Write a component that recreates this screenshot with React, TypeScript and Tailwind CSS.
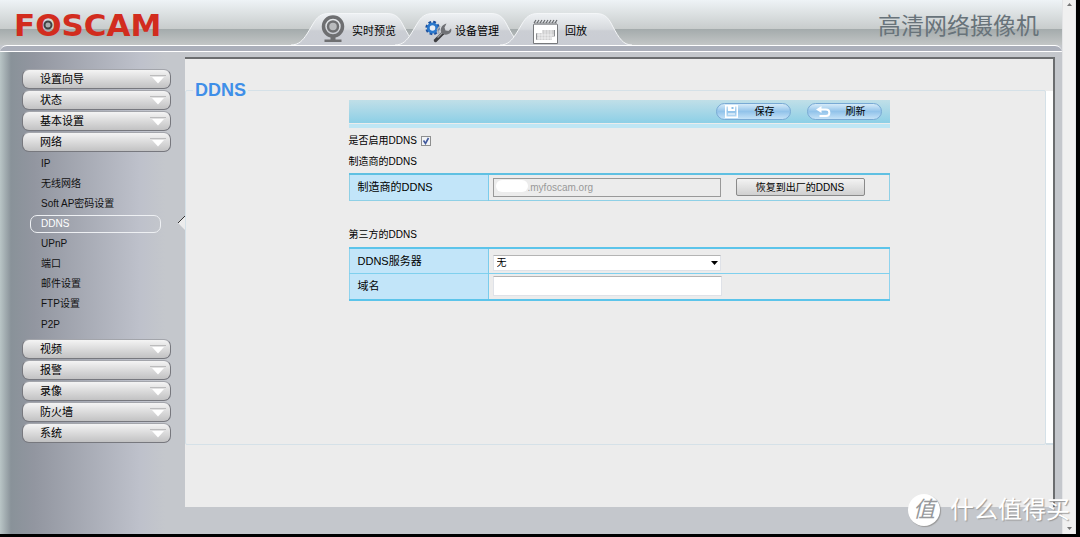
import { useState } from 'react';

interface MenuGroup {
  title: string;
  items?: string[];
}

const MENU: MenuGroup[] = [
  { title: '设置向导' },
  { title: '状态' },
  { title: '基本设置' },
  {
    title: '网络',
    items: ['IP', '无线网络', 'Soft AP密码设置', 'DDNS', 'UPnP', '端口', '邮件设置', 'FTP设置', 'P2P'],
  },
  { title: '视频' },
  { title: '报警' },
  { title: '录像' },
  { title: '防火墙' },
  { title: '系统' },
];

function CameraIcon() {
  return (
    <svg width="24" height="28" viewBox="0 0 24 28" fill="none">
      <circle cx="12" cy="11.5" r="9.5" stroke="#6e6f71" strokeWidth="3.5" />
      <circle cx="12" cy="11.5" r="5" fill="#b9bbbd" stroke="#6e6f71" strokeWidth="2.5" />
      <path d="M9.5 21h5v3.5h6V27h-17v-2.5h6z" fill="#6e6f71" />
    </svg>
  );
}

function GearIcon() {
  return (
    <svg width="27" height="28" viewBox="0 0 27 28" fill="none">
      <circle cx="7.5" cy="13" r="5.8" stroke="#1d4f9c" strokeWidth="2.8" strokeDasharray="2.6 1.95" />
      <circle cx="7.5" cy="13" r="4.2" fill="#e9eef5" stroke="#2a78cc" strokeWidth="2.8" />
      <path d="M10.500 25.500L18 18" stroke="#3c3c3e" strokeWidth="3.4" strokeLinecap="round" />
      <path d="M12.500 22.500L18 17" stroke="#9a9ca0" strokeWidth="1.4" />
      <path
        d="M21.500 8.500C17.500 9.500 15 13 16 16.500C17.500 20.500 23 20.500 25.500 17.500C26.500 16 26.500 14.500 26 13.500L23.500 16L20.500 15.500L19.500 12.500Z"
        fill="#6f7175"
      />
      <path d="M15 11l-2.500 3.500 1.500 4" stroke="#a9abaf" strokeWidth="1.600" />
    </svg>
  );
}

function CalendarIcon() {
  return (
    <svg className="mt-1" width="25" height="25" viewBox="0 0 25 25" fill="none">
      <path d="M.5 5.500h24v19H.5z" fill="#fff" stroke="#77797c" />
      <path d="M1 3.500h23v2.500H1z" fill="#a3a5a8" />
      <path
        d="M1 4l2-3M4 4l2-3M7 4l2-3M10 4l2-3M13 4l2-3M16 4l2-3M19 4l2-3M22 4l2-3"
        stroke="#66686b"
        strokeWidth="1.200"
      />
      <path d="M9 11h13v7h-3v3H3v-7h6z" fill="#cfcfd0" />
      <path d="M6 13v8M9 11v10M12 11v10M15 11v10M18 11v10M3 16h19M3 19h16" stroke="#fff" strokeWidth=".6" />
      <path d="M3.500 14.500v6M21.500 11v6" stroke="#8d8f92" />
    </svg>
  );
}

function SaveIcon() {
  return (
    <svg width="13" height="13" viewBox="0 0 13 13" fill="none">
      <path d="M.75.75h11.5v11.5H.75z" stroke="#fff" strokeWidth="1.5" />
      <path d="M3 1h7v5H3z" fill="#fff" />
      <path d="M6.5 2h2v2h-2z" fill="#8cbfe6" />
      <path d="M3 9h7" stroke="#fff" />
    </svg>
  );
}

function BackIcon() {
  return (
    <svg width="15" height="12" viewBox="0 0 15 12" fill="none">
      <path d="M3 3.500h7c4.500 0 4.500 6.500 0 6.500H3.500" stroke="#fff" strokeWidth="2" />
      <path d="M0 3.500L5.500 0v7z" fill="#fff" />
    </svg>
  );
}

interface TabProps {
  label: string;
  icon: React.ReactNode;
  className: string;
}

function Tab({ label, icon, className }: TabProps) {
  return (
    <a href="#" className={`relative flex h-8 items-center text-[11px] text-black ${className}`}>
      <svg className="absolute top-0 left-0" width="132" height="32" viewBox="0 0 132 32" fill="none">
        <defs>
          <linearGradient id="tab" x1="0" y1="0" x2="0" y2="1">
            <stop offset="0" stopColor="#eef1f4" />
            <stop offset=".5" stopColor="#d6d9dd" />
            <stop offset=".55" stopColor="#cbced4" />
            <stop offset="1" stopColor="#c9ccd3" />
          </linearGradient>
        </defs>
        <path
          d="M0 32C8 32 12 27 16 21L22 11C26 4 30 .5 38 .5H96C106 .5 109 6 113 14C119 25 123 32 132 32"
          fill="url(#tab)"
          stroke="#f4f6f8"
        />
      </svg>
      <span className="relative flex items-center">{icon}</span>
      <span className="relative pt-1">{label}</span>
    </a>
  );
}

function Header() {
  return (
    <header className="flex h-[45px] bg-[linear-gradient(#eef3f6_0%,#c8cccc_64%,#a4abac_65%,#c3c6c6_100%)]">
      <div className="w-[291px] shrink-0 pl-[14px]">
        <div className="relative w-fit font-['DejaVu_Sans',sans-serif] text-[31px] leading-[50px] font-bold text-[#d22c1e]">
          FOSCAM
          <svg className="absolute top-5 left-[29px]" width="10" height="10" viewBox="0 0 10 10">
            <circle cx="5" cy="5" r="3.5" fill="#a9abad" stroke="#3f4143" strokeWidth="2" />
          </svg>
        </div>
      </div>
      <nav className="flex flex-1 items-end">
        <Tab label="实时预览" icon={<CameraIcon />} className="w-[104px] gap-[7px] pl-[30px] whitespace-nowrap" />
        <Tab label="设备管理" icon={<GearIcon />} className="w-[105px] gap-[3px] pl-[30px] whitespace-nowrap" />
        <Tab label="回放" icon={<CalendarIcon />} className="w-[132px] gap-[7px] pl-[33px] whitespace-nowrap" />
      </nav>
      <h1 className="pr-[23px] text-[23px] leading-[52px] font-normal text-[#68737a]">高清网络摄像机</h1>
    </header>
  );
}

function Sidebar() {
  const [current, setCurrent] = useState('DDNS');

  return (
    <aside className="w-[185px] shrink-0 pt-[17px] pr-[14px] pl-[22px]">
      {MENU.map(group => (
        <div key={group.title}>
          <button
            type="button"
            className="mb-px flex h-5 w-full items-center justify-between rounded-[7px] border border-[#77787e] border-t-[#a3a5ab] bg-linear-to-b from-[#f4f4f4] to-[#c2c2c3] pr-1 pl-[17px] text-[11px] text-black"
          >
            {group.title}
            <svg width="16" height="9" viewBox="0 0 16 9">
              <path d="M0 .5h16" stroke="#bcbcbd" />
              <path d="M2 2h12L8 8.500z" fill="#fff" />
            </svg>
          </button>
          {group.items && (
            <ul className="pb-1 pl-2">
              {group.items.map(item => (
                <li key={item} className="relative flex h-[20px] items-center pt-px last:h-[22px]">
                  <a
                    href="#"
                    onClick={() => setCurrent(item)}
                    className={
                      item === current
                        ? 'h-[18px] w-[131px] rounded-[7px] border border-[#eef0f3] pl-[10px] text-[10px] leading-4 text-white'
                        : 'pl-[11px] text-[10px] text-[#111]'
                    }
                  >
                    {item}
                  </a>
                  {item === current && (
                    <svg className="absolute top-[3px] -right-[14px]" width="7" height="14" viewBox="0 0 7 14">
                      <path d="M7 0v14L0 7z" fill="#ececec" />
                      <path d="M7 0L0 7" stroke="#333" />
                    </svg>
                  )}
                </li>
              ))}
            </ul>
          )}
        </div>
      ))}
    </aside>
  );
}

function ToolButton({ label, icon }: { label: string; icon: React.ReactNode }) {
  return (
    <button
      type="button"
      className="flex h-[17px] w-[75px] items-center rounded-full border border-[#78a9d4] bg-linear-to-b from-[#d5eaf8] via-[#92c3ea] to-[#c4e2f7] pl-2 text-[10px] text-black"
    >
      <span className="w-[30px]">{icon}</span>
      {label}
    </button>
  );
}

function DdnsForm() {
  const [enabled, setEnabled] = useState(true);
  const [domain, setDomain] = useState('');

  return (
    <form className="mx-auto w-[541px] text-[10px] text-black">
      <div className="flex h-[23px] items-center justify-end gap-4 bg-linear-to-b from-[#c0dfe8] to-[#8ccfe6] pr-2">
        <ToolButton label="保存" icon={<SaveIcon />} />
        <ToolButton label="刷新" icon={<BackIcon />} />
      </div>
      <div className="mt-px h-1 bg-[#bfe6f4]" />

      <div className="flex h-6 items-center gap-1">
        <label htmlFor="enable">是否启用DDNS</label>
        <span className="relative flex">
          <input
            id="enable"
            type="checkbox"
            checked={enabled}
            onChange={e => setEnabled(e.target.checked)}
            className="mt-0.5 size-[10px] appearance-none border border-[#8e8f8f] bg-[#f1f3f5]"
          />
          {enabled && (
            <svg className="pointer-events-none absolute top-[3px] left-px" width="8" height="8" viewBox="0 0 8 8" fill="none">
              <path d="M1.5 3.500L3.500 6.500L6.500 1" stroke="#40589c" strokeWidth="1.600" />
            </svg>
          )}
        </span>
      </div>

      <h3 className="h-[21px] leading-5">制造商的DDNS</h3>
      <table className="w-full border-collapse border border-t-2 border-[#8fd0e6] border-t-[#5fc0e2]">
        <tbody>
          <tr className="h-[26px]">
            <th className="w-[139px] border-r border-[#7accec] bg-[#c2e5f9] pl-2 text-left text-[11px] font-normal">
              <label htmlFor="vendor">制造商的DDNS</label>
            </th>
            <td className="pl-1">
              <div className="flex items-center gap-[15px]">
                <div className="relative">
                  <input
                    id="vendor"
                    disabled
                    value=".myfoscam.org"
                    className="block h-[19px] w-[228px] border border-[#999] bg-[#ececec] pl-[34px] text-[10px] text-[#999]"
                  />
                  <div className="absolute top-0.5 left-[3px] h-3 w-8 rounded-full bg-white" />
                </div>
                <button
                  type="button"
                  className="h-[18px] w-[129px] rounded-xs border border-[#8a8a8a] bg-linear-to-b from-[#f3f3f3] to-[#d0d0d0] text-[10px]"
                >
                  恢复到出厂的DDNS
                </button>
              </div>
            </td>
          </tr>
        </tbody>
      </table>

      <h3 className="mt-6 h-[22px] leading-5">第三方的DDNS</h3>
      <table className="w-full border-collapse border border-y-2 border-[#8fd3ee] border-y-[#5cc4ea]">
        <tbody>
          <tr className="h-[26px] border-b border-[#7fd0ee]">
            <th className="w-[139px] border-r border-[#7accec] bg-[#c2e5f9] pl-2 text-left text-[11px] font-normal">
              <label htmlFor="server">DDNS服务器</label>
            </th>
            <td className="pl-1">
              <div className="relative mt-1 w-[228px]">
                <select
                  id="server"
                  className="block h-4 w-full appearance-none border border-[#dfe2e8] border-t-[#b4b4b4] bg-white pl-[3px] text-[10px] leading-[14px]"
                >
                  <option>无</option>
                </select>
                <svg className="pointer-events-none absolute top-1.5 right-[3px]" width="7" height="4" viewBox="0 0 7 4">
                  <path d="M0 0h7L3.500 4z" fill="#000" />
                </svg>
              </div>
            </td>
          </tr>
          <tr className="h-[26px]">
            <th className="border-r border-[#7accec] bg-[#c2e5f9] pl-2 text-left text-[11px] font-normal">
              <label htmlFor="domain">域名</label>
            </th>
            <td className="pl-1">
              <input
                id="domain"
                value={domain}
                onChange={e => setDomain(e.target.value)}
                className="block h-5 w-[229px] border border-[#dfe2e8] border-t-[#b4b4b4] bg-white px-1 text-[10px]"
              />
            </td>
          </tr>
        </tbody>
      </table>
    </form>
  );
}

function ScrollRail() {
  return (
    <div className="flex w-[14px] shrink-0 flex-col items-center justify-between border-x border-[#e3e4e6] bg-[#f0f0f0] pt-[3px] pb-1">
      <svg width="5" height="3" viewBox="0 0 5 3">
        <path d="M0 3h5L2.500 0z" fill="#777" />
      </svg>
      <svg width="5" height="3" viewBox="0 0 5 3">
        <path d="M0 0h5L2.500 3z" fill="#777" />
      </svg>
    </div>
  );
}

function Watermark() {
  return (
    <div className="pointer-events-none absolute right-[10px] bottom-[11px] flex items-center gap-[10px] text-white">
      <span className="flex size-8 items-center justify-center rounded-full bg-white text-[22px] leading-8 text-[#96989b] italic shadow-[1px_1px_1px_#999]">
        值
      </span>
      <span className="text-[24px] leading-8 [text-shadow:1px_1px_1px_#999]">什么值得买</span>
    </div>
  );
}

export default function App() {
  return (
    <div className="relative flex min-h-screen bg-black pr-1 pb-[3px] font-['Liberation_Sans','Noto_Sans_CJK_SC',sans-serif]">
      <div className="flex flex-1 flex-col bg-[#c4c7cc]">
        <Header />
        <div className="h-[7px] rounded-t-[7px] border-y border-white bg-[#abafba]" />
        <div className="flex flex-1 bg-[linear-gradient(90deg,#b9c5c6_0px,#899299_11px,#9296a0_34px,#bec1cb_140px,#c4c7cc_165px)]">
          <Sidebar />
          <main className="mt-[5px] mr-[7px] mb-[27px] flex flex-1 flex-col border-t-2 border-r-2 border-[#6b6d6f] bg-[#ececec] pb-[62px]">
            <div className="mt-[21px] flex flex-1">
              <fieldset className="flex-1 rounded-xs border border-[#d5e1e8] pr-0 pl-[7px]">
                <legend className="px-0.5 text-[18px] leading-5 font-bold text-[#3f8fe8]">DDNS</legend>
                <DdnsForm />
              </fieldset>
              <div className="mt-[11px] w-[7px] border-b-2 border-[#d3dfe6] bg-white" />
            </div>
          </main>
        </div>
      </div>
      <ScrollRail />
      <Watermark />
    </div>
  );
}
